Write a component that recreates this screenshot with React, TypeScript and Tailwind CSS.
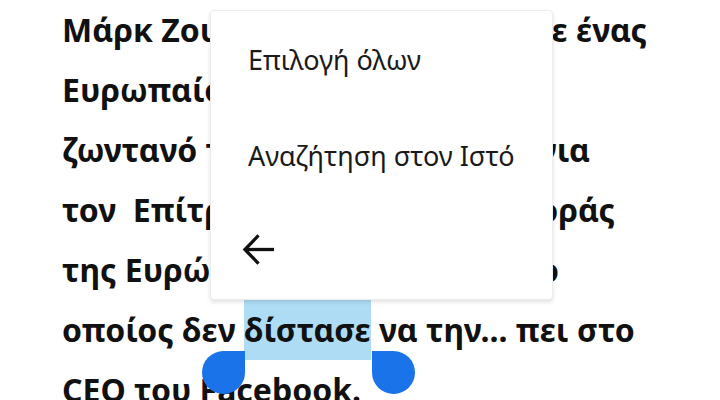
import React from "react";

const font = { fontFamily: '"Noto Sans", "Open Sans", sans-serif' };

function Line({ left, right, w }: { left: string; right?: string; w?: string }) {
  return (
    <div className={`flex justify-between whitespace-nowrap ${w ?? ""}`}>
      <span>{left}</span>
      {right && <span>{right}</span>}
    </div>
  );
}

export default function App() {
  return (
    <div className="relative w-[720px] h-[400px] bg-white overflow-hidden" style={font}>
      {/* article text */}
      <div className="pl-[62px] text-[32px] leading-[60px] font-bold text-[#111]">
        <Line left="Μάρκ Ζουκερμπεργκ" right="υπήρξε ένας" w="w-[585px]" />
        <Line left="Ευρωπαίος αξιωματούχος" />
        <Line left="ζωντανό το μήνυμα" right="για" w="w-[528px]" />
        <Line left={"τον\u00a0 Επίτροπο"} right="Εσωτερικής Αγοράς" w="w-[553px]" />
        <Line left="της Ευρώπης" right="Μπρετόν, ο" w="w-[497px]" />
        <div className="whitespace-nowrap">
          οποίος δεν <span className="inline-block bg-[#aedcf5]">δίστασε</span> να την... πει στο
        </div>
        <div className="whitespace-nowrap">CEO του Facebook.</div>
      </div>

      {/* selection toolbar overflow menu */}
      <div className="absolute left-[210px] top-[10px] w-[343px] h-[290px] bg-white rounded-[4px] border border-[#ececec] shadow-[0_2px_4px_rgba(0,0,0,0.12)] flex flex-col text-[#1a1a1a]">
        <div className="h-[97px] pl-[37px] pt-[29px] text-[27px] leading-[40px]">Επιλογή όλων</div>
        <div className="h-[97px] pl-[37px] pt-[28px] text-[27px] leading-[40px]">Αναζήτηση στον Ιστό</div>
        <div className="pl-[31px] pt-[28px]">
          <svg width="33" height="33" viewBox="0 0 34 34" fill="none" stroke="#111" strokeWidth="3.4">
            <path d="M3 17 H33" />
            <path d="M17 2.5 L3 17 L17 31.5" strokeLinejoin="miter" />
          </svg>
        </div>
      </div>

      {/* selection handles */}
      <div className="absolute left-[202px] top-[351px] w-[43px] h-[43px] bg-[#1a73e8] rounded-[22px_0_22px_22px]" />
      <div className="absolute left-[372px] top-[351px] w-[43px] h-[43px] bg-[#1a73e8] rounded-[0_22px_22px_22px]" />
    </div>
  );
}
